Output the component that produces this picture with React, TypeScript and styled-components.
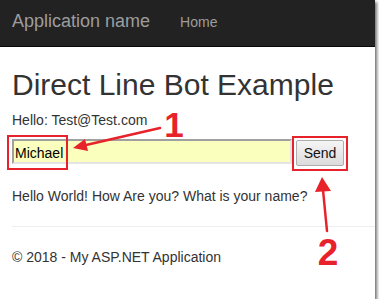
import React from 'react'
import styled, { createGlobalStyle } from 'styled-components'

const RED = '#e8222b'

const GlobalStyle = createGlobalStyle`
  html, body {
    margin: 0;
    padding: 0;
    background: #fff;
  }
  body {
    font-family: "Liberation Sans", Arial, sans-serif;
  }
`

const Frame = styled.div`
  position: relative;
  width: 375px;
  height: 299px;
  overflow: hidden;
  background: #fff;
  color: #333;
  font-size: 14px;
  line-height: 20px;
  box-shadow: 2px 2px 3px rgba(0, 0, 0, 0.55);
`

const Navbar = styled.nav`
  display: flex;
  align-items: baseline;
  box-sizing: border-box;
  height: 47px;
  padding: 11px 0 0 12px;
  background: #222;
  border-bottom: 1px solid #080808;
`

const Brand = styled.span`
  font-size: 18px;
  line-height: 20px;
  color: #9d9d9d;
`

const NavLink = styled.span`
  margin-left: 30px;
  font-size: 14px;
  line-height: 20px;
  color: #9d9d9d;
`

const Content = styled.main`
  padding-left: 12px;
`

const Title = styled.h2`
  margin: 21px 0 9px;
  font-size: 30px;
  font-weight: normal;
  line-height: 33px;
  color: #333;
`

const Text = styled.p<{ $top?: number }>`
  margin: ${({ $top }) => $top ?? 0}px 0 0;
  line-height: 20px;
`

const FormRow = styled.div`
  display: flex;
  align-items: flex-start;
  gap: 4px;
  margin-top: 9px;
`

const NameInput = styled.input`
  box-sizing: border-box;
  width: 280px;
  height: 25px;
  margin: 0;
  padding: 2px 0 0 1px;
  border-style: solid;
  border-width: 2px 2px 2px 2px;
  border-color: #a0a0a0 #e4e4e4 #e4e4e4 #a0a0a0;
  background: #faffbd;
  color: #000;
  font-family: "Liberation Sans", Arial, sans-serif;
  font-size: 14px;
  outline: none;
`

const SendButton = styled.button`
  box-sizing: border-box;
  width: 48px;
  height: 26px;
  margin-top: 1px;
  padding: 0;
  border: 1px solid #adadad;
  border-radius: 2px;
  background: linear-gradient(#f5f5f5, #dcdcdc);
  color: #111;
  font-family: "Liberation Sans", Arial, sans-serif;
  font-size: 14px;
`

const Rule = styled.hr`
  margin: 20px 0;
  border: 0;
  border-top: 1px solid #eee;
`

const Callout = styled.div<{ $x: number; $y: number; $w: number; $h: number }>`
  position: absolute;
  left: ${({ $x }) => $x}px;
  top: ${({ $y }) => $y}px;
  width: ${({ $w }) => $w}px;
  height: ${({ $h }) => $h}px;
  box-sizing: border-box;
  border: 2px solid ${RED};
  pointer-events: none;
`

const Marks = styled.svg`
  position: absolute;
  left: 0;
  top: 0;
  pointer-events: none;
`

const Number = styled.text`
  font-family: "Liberation Sans", Arial, sans-serif;
  font-weight: bold;
  fill: ${RED};
`

export default function App() {
  return (
    <>
      <GlobalStyle />
      <Frame>
        <Navbar>
          <Brand>Application name</Brand>
          <NavLink>Home</NavLink>
        </Navbar>
        <Content>
          <Title>Direct Line Bot Example</Title>
          <Text>Hello: Test@Test.com</Text>
          <FormRow>
            <NameInput defaultValue="Michael" />
            <SendButton>Send</SendButton>
          </FormRow>
          <Text $top={20}>Hello World! How Are you? What is your name?</Text>
          <Rule />
          <Text>© 2018 - My ASP.NET Application</Text>
        </Content>

        <Callout $x={7} $y={135} $w={61} $h={35} />
        <Callout $x={292} $y={136} $w={56} $h={35} />

        <Marks width={375} height={299}>
          <g stroke={RED} strokeWidth={2.5} strokeLinecap="round">
            <line x1={160} y1={128} x2={86} y2={145} />
            <line x1={327} y1={231} x2={323} y2={190} />
          </g>
          <g fill={RED}>
            <polygon points="73,148 88,151 85,139" />
            <polygon points="322,177 331,191 315,192" />
          </g>
          <Number x={174} y={137} fontSize={35} textAnchor="middle">1</Number>
          <Number x={328} y={265} fontSize={37} textAnchor="middle">2</Number>
        </Marks>
      </Frame>
    </>
  )
}
